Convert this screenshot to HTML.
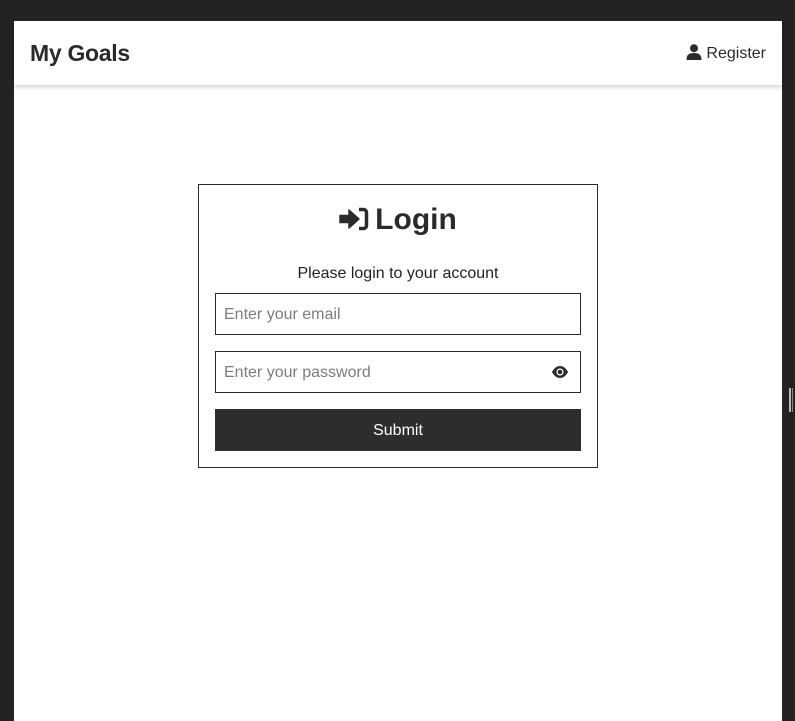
<!DOCTYPE html>
<html><head><style>
body{margin:0;background:#232323;width:795px;height:707px;overflow:hidden;font-family:"Liberation Sans",sans-serif;position:relative}
.page{position:absolute;left:14px;top:21px;width:768px;height:700px;background:#fff}
.nav{position:absolute;left:0;top:0;width:768px;height:64px;background:#fff;box-shadow:0 2px 5px rgba(0,0,0,.18)}
.brand{position:absolute;left:16px;top:19px;font-size:23px;font-weight:bold;color:#2a2a2a;letter-spacing:-.3px}
.reg{position:absolute;right:16px;top:23px;font-size:16px;color:#2a2a2a}
.card{position:absolute;left:184px;top:163px;width:400px;height:284px;border:1px solid #2a2a2a;box-sizing:border-box}
h1{position:absolute;left:0;width:100%;top:18px;margin:0;text-align:center;font-size:30px;font-weight:bold;color:#2a2a2a}
.sub{position:absolute;width:100%;top:80px;text-align:center;font-size:16px;color:#222}
.in{position:absolute;left:16px;width:366px;height:42px;border:1px solid #2a2a2a;box-sizing:border-box;font-size:16px;color:#7c7c85;padding:12px 0 0 8px}
.btn{position:absolute;left:16px;top:224px;width:366px;height:42px;background:#2d2d2d;color:#fff;font-size:16px;text-align:center;line-height:43px}
</style></head><body>
<div class="page">
<div class="nav"><div class="brand">My Goals</div>
<div class="reg"><svg width="16" height="16" viewBox="0 0 16 16" style="vertical-align:-2px;margin-right:4px"><circle cx="8" cy="4.2" r="4" fill="#2a2a2a"/><path d="M0.5 16 C0.5 10.5 3 9 8 9 C13 9 15.5 10.5 15.5 16Z" fill="#2a2a2a"/></svg>Register</div></div>
<div class="card">
<h1><svg width="30" height="24" viewBox="0 0 30 24" style="vertical-align:-2px;margin-right:6px"><path d="M1 8.5h9V3l10 9-10 9v-5.5H1z" fill="#2a2a2a" stroke="#2a2a2a" stroke-width="1.5" stroke-linejoin="round"/><path d="M20 2.5h4.5a3 3 0 0 1 3 3v13a3 3 0 0 1-3 3H20" fill="none" stroke="#2a2a2a" stroke-width="3.5"/></svg>Login</h1>
<div class="sub">Please login to your account</div>
<div class="in" style="top:108px">Enter your email</div>
<div class="in" style="top:166px">Enter your password
<svg width="18" height="14" viewBox="0 0 18 14" style="position:absolute;right:11px;top:13px"><path d="M1 7C3 3 6 1 9 1s6 2 8 6c-2 4-5 6-8 6S3 11 1 7z" fill="#2a2a2a"/><circle cx="9" cy="7" r="3.6" fill="#fff"/><circle cx="9" cy="7" r="2.3" fill="#2a2a2a"/></svg></div>
<div class="btn">Submit</div>
</div>
</div>
<div style="position:absolute;left:789px;top:388px;width:2px;height:24px;background:#bbb"></div>
<div style="position:absolute;left:792px;top:388px;width:1px;height:24px;background:#888"></div>
</body></html>
